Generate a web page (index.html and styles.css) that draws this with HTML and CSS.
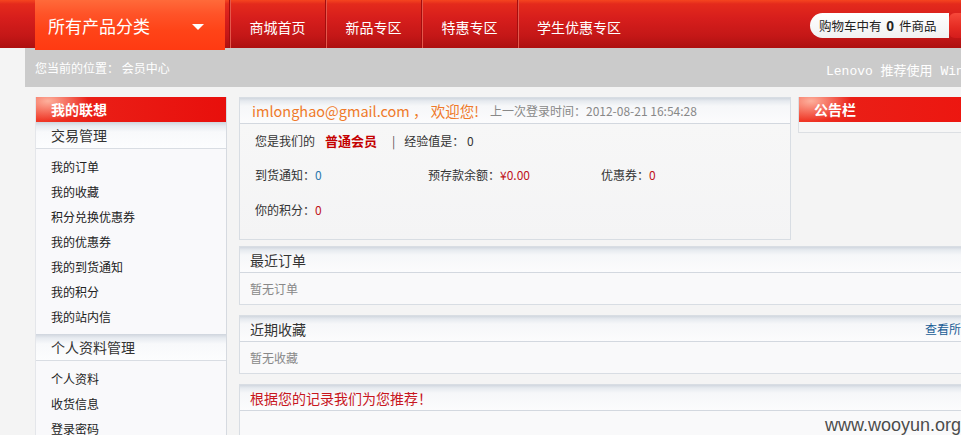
FILE: index.html
```html
<!DOCTYPE html>
<html lang="zh-CN">
<head>
<meta charset="utf-8">
<title>会员中心</title>
<link rel="stylesheet" href="styles.css">
</head>
<body>
<div class="topbar">
  <div class="cat">所有产品分类<span class="arrow"></span></div>
  <ul class="nav">
    <li>商城首页</li>
    <li>新品专区</li>
    <li>特惠专区</li>
    <li class="wide">学生优惠专区</li>
  </ul>
  <div class="cart">购物车中有 <b>0</b> 件商品</div>
  <div class="cartbtn"></div>
</div>
<div class="crumb">
  <span class="where">您当前的位置： 会员中心</span>
  <span class="rec">Lenovo 推荐使用 Windows 7</span>
</div>
<div class="page">
  <aside class="side">
    <div class="side-h">我的联想</div>
    <div class="side-sub">交易管理</div>
    <ul class="side-list">
      <li>我的订单</li>
      <li>我的收藏</li>
      <li>积分兑换优惠券</li>
      <li>我的优惠券</li>
      <li>我的到货通知</li>
      <li>我的积分</li>
      <li>我的站内信</li>
    </ul>
    <div class="side-sub">个人资料管理</div>
    <ul class="side-list">
      <li>个人资料</li>
      <li>收货信息</li>
      <li>登录密码</li>
    </ul>
  </aside>
  <main class="main">
    <div class="row">
      <section class="box welcome">
        <div class="box-h"><span class="mail">imlonghao@gmail.com ， 欢迎您!</span><span class="last">上一次登录时间：2012-08-21 16:54:28</span></div>
        <div class="welcome-body">
          <div class="line1"><span>您是我们的</span><b class="level">普通会员</b><span class="bar">|</span><span>经验值是： 0</span></div>
          <div class="stats">
            <span>到货通知：<em class="blue">0</em></span>
            <span>预存款余额：<em class="red">¥0.00</em></span>
            <span>优惠券：<em class="red">0</em></span>
          </div>
          <div class="stats">
            <span>你的积分：<em class="red">0</em></span>
          </div>
        </div>
      </section>
      <section class="notice">
        <div class="notice-h">公告栏</div>
        <div class="notice-b"></div>
      </section>
    </div>
    <section class="box panel">
      <div class="box-h">最近订单</div>
      <div class="box-b">暂无订单</div>
    </section>
    <section class="box panel">
      <div class="box-h"><span>近期收藏</span><a class="more">查看所有</a></div>
      <div class="box-b">暂无收藏</div>
    </section>
    <section class="box panel">
      <div class="box-h red-t">根据您的记录我们为您推荐！</div>
      <div class="box-b tall"></div>
    </section>
  </main>
</div>
<div class="wm">www.wooyun.org</div>
</body>
</html>
```
FILE: styles.css
```css
html, body {
  margin: 0;
  padding: 0;
  overflow: hidden;
  height: 435px;
}
body {
  background: #f4f4f4;
  font-family: "Noto Sans CJK SC", "Liberation Sans", sans-serif;
  color: #333;
  font-size: 12px;
  position: relative;
}
ul { margin: 0; padding: 0; list-style: none; }

/* top bar */
.topbar {
  display: flex;
  height: 48px;
  padding-left: 35px;
  background: linear-gradient(#f5451f 0, #e42a1c 4px, #d71e1c 18px, #c41717 36px, #ad1010 48px);
}
.cat {
  position: relative;
  flex-shrink: 0;
  width: 177px;
  height: 50px;
  padding-left: 13px;
  display: flex;
  align-items: center;
  color: #fff;
  font-size: 17px;
  background: linear-gradient(#ff6a3a 0, #ff5328 14px, #ff4418 30px, #ff3a12 50px);
}
.arrow {
  margin-left: auto;
  margin-right: 21px;
  margin-top: 3px;
  width: 0;
  height: 0;
  border-left: 6px solid transparent;
  border-right: 6px solid transparent;
  border-top: 6px solid #fff;
}
.nav {
  display: flex;
  margin-left: 4px;
  flex-shrink: 0;
}
.nav li {
  width: 95px;
  text-align: center;
  border-left: 1px solid #a30e0e;
  box-shadow: inset 1px 0 0 #e4584c;
  color: #fff;
  font-size: 14px;
  line-height: 42px;
  padding-top: 6px;
}
.nav li.wide {
  width: 122px;
}
.cart {
  flex-shrink: 0;
  margin-left: 170px;
  margin-top: 13px;
  height: 25px;
  width: 130px;
  padding-left: 9px;
  border-radius: 13px 0 0 13px;
  background: linear-gradient(#ffffff, #f1f1f1);
  color: #222;
  font-size: 12.5px;
  line-height: 25px;
  white-space: nowrap;
}
.cart b {
  font-family: "Liberation Sans", sans-serif;
  font-size: 14px;
  margin: 0 2px;
}
.cartbtn {
  flex-shrink: 0;
  margin-top: 13px;
  width: 40px;
  height: 25px;
  border-radius: 6px 0 0 6px;
  background: linear-gradient(#f7493a, #e42a22 60%, #d41c1c);
}

/* breadcrumb */
.crumb {
  margin-left: 25px;
  height: 39px;
  padding-left: 10px;
  background: #cbcbcb;
  color: #fff;
  display: grid;
  grid-template-columns: 791px max-content;
  align-items: center;
  white-space: nowrap;
}
.where { font-size: 12px; }
.rec {
  font-family: "Liberation Mono", "Noto Sans CJK SC", monospace;
  font-size: 13px;
  padding-top: 4px;
}

/* layout */
.page {
  display: flex;
  gap: 12px;
  padding: 10px 0 0 35px;
  width: 950px;
}
.side {
  flex-shrink: 0;
  width: 190px;
  border-left: 1px solid #e4e6ea;
  border-right: 1px solid #d6dae0;
  background: #f9f9fb;
}
.side-h {
  height: 25px;
  line-height: 25px;
  padding-left: 15px;
  color: #fff;
  font-size: 14px;
  font-weight: bold;
  background: radial-gradient(ellipse 40px 20px at 12px 4px, rgba(255,190,170,0.9), rgba(255,120,90,0) 100%), linear-gradient(90deg, #f03a28 0, #ea1e16 30%, #e80f0c 100%);
}
.side-sub {
  height: 26px;
  line-height: 26px;
  padding-left: 15px;
  font-size: 14px;
  color: #333;
  border-bottom: 1px solid #d9dde3;
  background: linear-gradient(#cfd5dd 0, #e7ebf0 4px, #f8f9fb 10px, #fcfdfe 26px);
}
.side-list {
  padding: 5px 0;
}
.side-list li {
  line-height: 25px;
  height: 25px;
  padding-left: 15px;
  font-size: 12px;
  color: #222;
}

.main {
  flex-shrink: 0;
  width: 746px;
}
.row {
  display: flex;
  gap: 7px;
  align-items: flex-start;
}
.box {
  border: 1px solid #d8dde3;
  background: #f7f7f8;
}
.box-h {
  height: 25px;
  line-height: 26px;
  padding: 0 11px 0 10px;
  border-bottom: 1px solid #d3d8df;
  background: linear-gradient(#d1d7df 0, #e6eaef 3px, #f6f7f9 8px, #fcfcfd 26px);
  font-size: 14px;
  color: #333;
  display: flex;
  align-items: center;
  white-space: nowrap;
}
.welcome {
  width: 550px;
  flex-shrink: 0;
}
.welcome .box-h {
  padding-left: 12px;
}
.mail {
  color: #ef7a2a;
  font-size: 14.5px;
}
.last {
  color: #888;
  font-size: 12px;
  margin-left: 11px;
}
.welcome-body {
  height: 90px;
  padding: 6px 15px 19px 15px;
  background: linear-gradient(#f7f7f7, #f4f4f5);
}
.line1 {
  display: flex;
  align-items: center;
  height: 20px;
  font-size: 12px;
}
.level {
  color: #c40000;
  font-size: 13px;
  margin-left: 10px;
}
.bar {
  margin: 0 9px 0 15px;
  color: #555;
}
.stats {
  display: grid;
  grid-template-columns: 173px 173px 173px;
  margin-top: 15px;
  height: 20px;
  line-height: 20px;
  font-size: 12px;
}
.stats em {
  font-style: normal;
}
.blue { color: #2b78ad; }
.red { color: #c0121c; }

.notice {
  flex: 1;
  border: 1px solid #dcdfe3;
  border-top: 0;
  background: #f6f6f6;
}
.notice-h {
  height: 25px;
  line-height: 25px;
  padding-left: 15px;
  color: #fff;
  font-size: 14px;
  font-weight: bold;
  background: radial-gradient(ellipse 40px 20px at 12px 4px, rgba(255,190,170,0.9), rgba(255,120,90,0) 100%), linear-gradient(90deg, #f03a28 0, #ea1e16 30%, #ed150f 100%);
}
.notice-b {
  height: 10px;
}

.panel {
  margin-top: 6px;
}
.panel + .panel {
  margin-top: 10px;
}
.box-b {
  height: 31px;
  line-height: 31px;
  padding-left: 10px;
  color: #888;
  font-size: 12px;
  background: #f9f9fa;
}
.box-b.tall {
  height: 60px;
}
.more {
  margin-left: auto;
  color: #1a5d96;
  font-size: 12px;
}
.red-t {
  color: #c8161e;
}

.wm {
  position: absolute;
  left: 825px;
  top: 415px;
  font-family: "Liberation Sans", sans-serif;
  font-size: 18px;
  line-height: 20px;
  color: #4c4c4c;
  text-shadow: 0 0 2px #fff;
}
```
